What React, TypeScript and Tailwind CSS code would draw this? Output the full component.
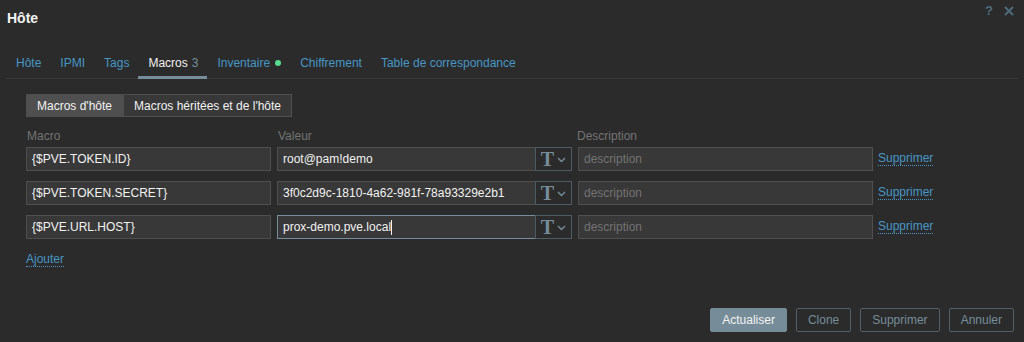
import React from "react";

type MacroRow = {
  macro: string;
  value: string;
  focused?: boolean;
};

const rows: MacroRow[] = [
  { macro: "{$PVE.TOKEN.ID}", value: "root@pam!demo" },
  { macro: "{$PVE.TOKEN.SECRET}", value: "3f0c2d9c-1810-4a62-981f-78a93329e2b1" },
  { macro: "{$PVE.URL.HOST}", value: "prox-demo.pve.local", focused: true },
];

const tabs = ["Hôte", "IPMI", "Tags", "Macros", "Inventaire", "Chiffrement", "Table de correspondance"];

function TypeButton() {
  return (
    <div className="w-[37px] h-[24px] flex items-center justify-center gap-[3px] border border-[#4d5b63] bg-[#2b2b2b] -ml-px">
      <span className="text-[20px] leading-none font-bold text-[#768d99]" style={{ fontFamily: '"Liberation Serif", serif' }}>
        T
      </span>
      <svg width="9" height="6" viewBox="0 0 9 6" className="mt-[2px]">
        <path d="M1 1 L4.5 4.5 L8 1" fill="none" stroke="#768d99" strokeWidth="1.4" />
      </svg>
    </div>
  );
}

export default function App() {
  return (
    <div
      className="w-[1024px] h-[342px] bg-[#2b2b2b] flex flex-col text-[12px] text-[#f2f2f2] overflow-hidden"
      style={{ fontFamily: '"Liberation Sans", Arial, sans-serif' }}
    >
      <div className="flex items-start justify-between pl-[7px] pr-[10px] pt-[8px] h-[36px]">
        <h1 className="text-[14px] font-bold text-[#f2f2f2]">Hôte</h1>
        <div className="flex items-center gap-[11px] -mt-[7px] text-[#4f6a7b]">
          <span className="text-[13px] font-bold">?</span>
          <svg width="10" height="10" viewBox="0 0 10 10">
            <path d="M1 1 L9 9 M9 1 L1 9" stroke="#4f6a7b" strokeWidth="2" />
          </svg>
        </div>
      </div>

      <div className="mx-[6px] mt-[17px] flex border-b border-[#383838]">
        {tabs.map((t) => {
          const active = t === "Macros";
          return (
            <div
              key={t}
              className={`pl-[10px] pr-[9px] pb-[4px] pt-[1px] flex items-center gap-[4px] border-b-[3px] -mb-px ${
                active ? "border-[#768d99] text-[#f2f2f2]" : "border-transparent text-[#4796c4]"
              }`}
            >
              <span>{t}</span>
              {active && <span className="text-[#768d99]">3</span>}
              {t === "Inventaire" && <span className="w-[6px] h-[6px] rounded-full bg-[#59db8f] ml-[1px]" />}
            </div>
          );
        })}
      </div>

      <div className="px-[26px] pt-[15px]">
        <div className="flex h-[23px]">
          <div className="px-[11px] flex items-center bg-[#4f4f4f] text-[#f2f2f2]">Macros d'hôte</div>
          <div className="px-[10px] flex items-center bg-[#383838] border border-[#4f4f4f] text-[#f2f2f2]">
            Macros héritées et de l'hôte
          </div>
        </div>

        <div className="flex mt-[11px] text-[#737373] h-[15px] items-center">
          <span className="w-[251px] pl-[1px]">Macro</span>
          <span className="w-[300px] pl-[1px]">Valeur</span>
          <span>Description</span>
        </div>

        <div className="flex flex-col gap-[10px] mt-[4px]">
          {rows.map((r) => (
            <div key={r.macro} className="flex items-center h-[24px]">
              <div className="w-[245px] h-[24px] flex items-center px-[5px] bg-[#383838] border border-[#4f4f4f] text-[#f2f2f2]">
                {r.macro}
              </div>
              <div
                className={`ml-[6px] w-[259px] h-[24px] flex items-center px-[5px] bg-[#383838] border text-[#f2f2f2] ${
                  r.focused ? "border-[#768d99]" : "border-[#4f4f4f]"
                }`}
              >
                {r.value}
                {r.focused && <span className="w-px h-[15px] bg-[#f2f2f2]" />}
              </div>
              <TypeButton />
              <div className="ml-[6px] w-[295px] h-[24px] flex items-center px-[5px] bg-[#383838] border border-[#4f4f4f] text-[#737373]">
                description
              </div>
              <span className="ml-[5px] text-[#4796c4] border-b border-dotted border-[#4796c4] leading-[13px]">
                Supprimer
              </span>
            </div>
          ))}
        </div>

        <div className="mt-[11px]">
          <span className="text-[#4796c4] border-b border-dotted border-[#4796c4] leading-[13px]">Ajouter</span>
        </div>
      </div>

      <div className="mt-auto flex justify-end gap-[9px] pr-[10px] pb-[10px]">
        <button className="h-[24px] px-[11px] bg-[#768d99] border border-[#768d99] text-[#f2f2f2] rounded-[2px]">
          Actualiser
        </button>
        <button className="h-[24px] px-[11px] border border-[#4f5f68] text-[#768d99] rounded-[2px]">Clone</button>
        <button className="h-[24px] px-[11px] border border-[#4f5f68] text-[#768d99] rounded-[2px]">Supprimer</button>
        <button className="h-[24px] px-[11px] border border-[#4f5f68] text-[#768d99] rounded-[2px]">Annuler</button>
      </div>
    </div>
  );
}
